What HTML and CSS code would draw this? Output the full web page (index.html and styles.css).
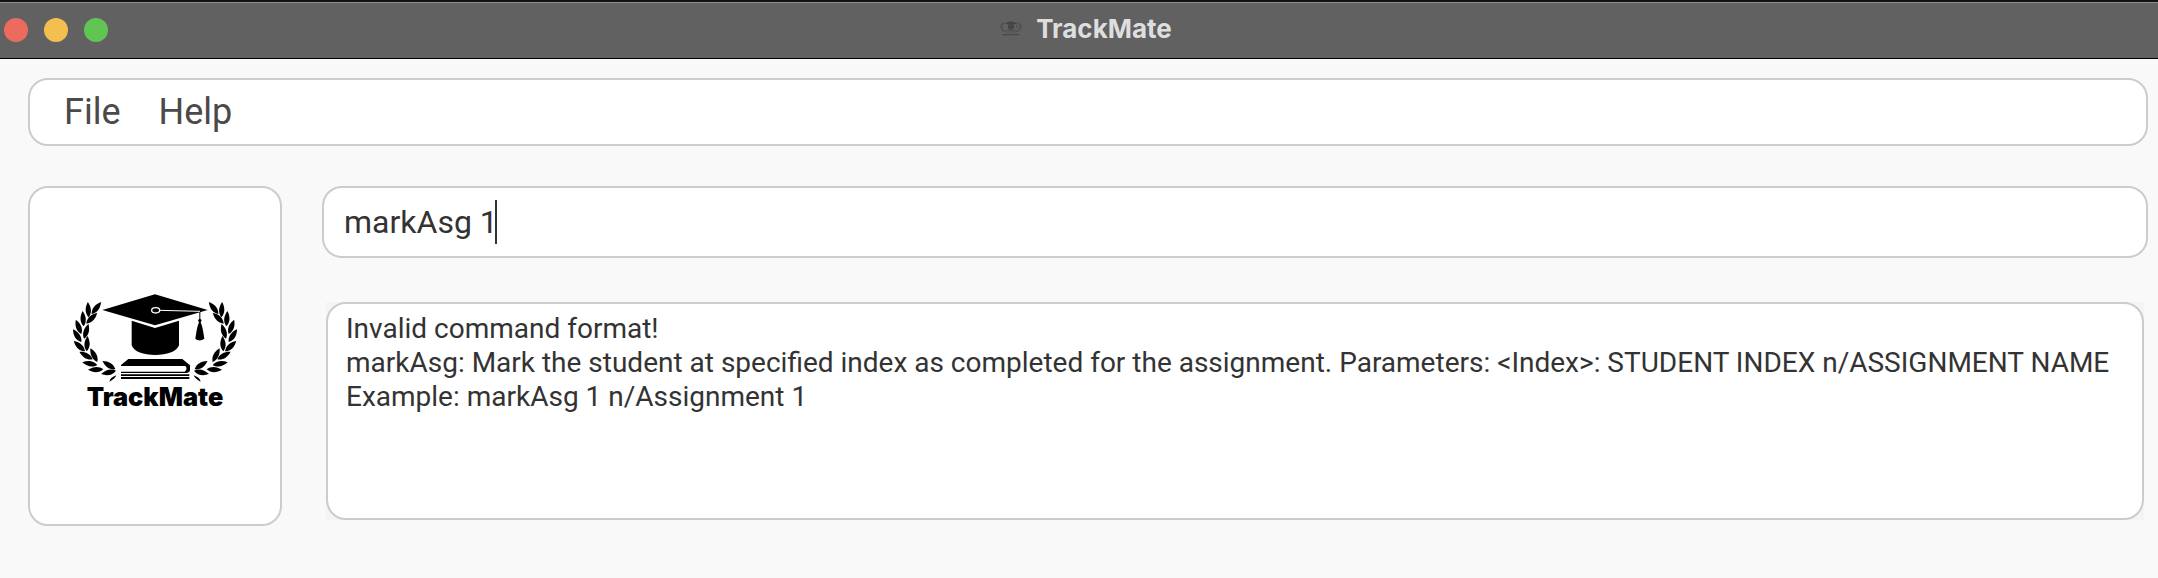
FILE: index.html
```html
<!DOCTYPE html>
<html lang="en">
<head>
<meta charset="utf-8">
<title>TrackMate</title>
<link rel="stylesheet" href="styles.css">
</head>
<body>
<header class="titlebar">
  <div class="window-controls">
    <button class="dot dot-close" type="button" aria-label="Close"></button>
    <button class="dot dot-minimize" type="button" aria-label="Minimize"></button>
    <button class="dot dot-zoom" type="button" aria-label="Zoom"></button>
  </div>
  <div class="window-title">
    <svg class="title-icon" viewBox="30 40 510 340" aria-hidden="true">
      <use href="#emblem"/>
      <path d="M90 350H480" stroke="#444" stroke-width="30" stroke-dasharray="36 8"/>
    </svg>
    <span>TrackMate</span>
  </div>
</header>
<main class="window-body">
  <nav class="panel menubar">
    <button class="menu-item" type="button">File</button>
    <button class="menu-item" type="button">Help</button>
  </nav>
  <div class="content">
    <aside class="panel brand">
      <svg class="brand-logo" viewBox="0 0 570 456" role="img" aria-label="TrackMate">
        <defs>
          <path id="leaf" d="M0 0C-11 -13 -10 -30 0 -46C10 -30 11 -13 0 0Z"/>
          <g id="branch">
            <use href="#leaf" transform="translate(95 102) rotate(38)"/>
            <use href="#leaf" transform="translate(86 112) rotate(-3)"/>
            <use href="#leaf" transform="translate(79 131) rotate(45)"/>
            <use href="#leaf" transform="translate(71 139) rotate(-4)"/>
            <use href="#leaf" transform="translate(64 162) rotate(-21)"/>
            <use href="#leaf" transform="translate(72 176) rotate(17)"/>
            <use href="#leaf" transform="translate(64 186) rotate(-33)"/>
            <use href="#leaf" transform="translate(80 214) rotate(3)"/>
            <use href="#leaf" transform="translate(75 214) rotate(-47)"/>
            <use href="#leaf" transform="translate(112 246) rotate(-27)"/>
            <use href="#leaf" transform="translate(98 238) rotate(-60)"/>
            <use href="#leaf" transform="translate(112 255) rotate(-80)"/>
            <use href="#leaf" transform="translate(166 268) rotate(-57)"/>
            <use href="#leaf" transform="translate(130 268) rotate(-92)"/>
            <use href="#leaf" transform="translate(168 272) rotate(-103)"/>
            <path d="M148 305Q151 292 169 286Q164 298 148 305Z"/>
          </g>
          <g id="emblem">
            <use href="#branch"/>
            <use href="#branch" transform="translate(570 0) scale(-1 1)"/>
            <path d="M127 90L285 43L443 90L285 136Z"/>
            <path d="M215 122L285 144L357 122V196C350 216 320 225 286 225C250 225 222 216 215 196Z"/>
            <path d="M418 94L421 94V116L425 121L422 127C428 140 430 158 433 176Q420 186 406 177C409 158 411 140 417 127L414 121L418 116Z"/>
            <path d="M205 237H367L390 256V270Q390 278 378 279H183V275H374Q384 266 376 258H183V255Z"/>
            <path d="M183 283H388V288H183ZM183 291H388V297H183Z"/>
          </g>
        </defs>
        <use href="#emblem"/>
        <path d="M300 91L420 94" stroke="#fff" stroke-width="3"/>
        <ellipse cx="287" cy="91" rx="12" ry="8" fill="none" stroke="#fff" stroke-width="4"/>
        <text class="wordmark" x="285" y="377" text-anchor="middle">TrackMate</text>
      </svg>
    </aside>
    <section class="console">
      <div class="command">
        <input class="panel command-input" type="text" value="markAsg 1" aria-label="Command">
        <span class="caret" aria-hidden="true"></span>
      </div>
      <div class="result">
        <textarea class="panel result-text" aria-label="Result" readonly>Invalid command format!
markAsg: Mark the student at specified index as completed for the assignment. Parameters: &lt;Index&gt;: STUDENT INDEX n/ASSIGNMENT NAME
Example: markAsg 1 n/Assignment 1</textarea>
      </div>
    </section>
  </div>
</main>
</body>
</html>
```
FILE: styles.css
```css
* { box-sizing: border-box; }
body {
  margin: 0;
  min-height: 100vh;
  background: #f9f9f9;
  color: #333;
  font-family: Roboto, "Liberation Sans", sans-serif;
}
.titlebar {
  display: grid;
  grid-template-columns: 1fr auto 1fr;
  align-items: center;
  height: 59px;
  padding: 0 4px;
  background: #616161;
  border-top: 2px solid #111;
  border-bottom: 1px solid #000;
  box-shadow: inset 0 1px #8c9086;
}
.window-controls { display: flex; gap: 16px; }
.dot { width: 24px; height: 24px; padding: 0; border: 0; border-radius: 50%; }
.dot-close { background: #ed6a5e; }
.dot-minimize { background: #f5bf4f; }
.dot-zoom { background: #61c554; }
.window-title { display: flex; align-items: center; gap: 14px; padding: 0 0 3px 14px; color: #dedede; font-family: Inter, sans-serif; font-size: 26px; font-weight: 700; }
.title-icon { width: 22px; height: 15px; fill: #444; }
.window-body { padding: 19px 10px 40px 28px; }
.panel { background: #fff; border: 2px solid #ccc; border-radius: 20px; }
.menubar { display: flex; align-items: center; gap: 38px; height: 68px; padding: 0 34px; }
.menu-item { padding: 0; border: 0; background: none; color: #4a4a4a; font: inherit; font-size: 36px; }
.content { display: flex; gap: 40px; margin-top: 40px; }
.brand { display: flex; flex: none; align-items: center; justify-content: center; width: 254px; height: 340px; }
.brand-logo { width: 190px; height: 152px; }
.wordmark { font-family: Inter, sans-serif; font-size: 76px; font-weight: 900; }
.console { display: flex; flex: 1; flex-direction: column; gap: 44px; min-width: 0; }
.command { position: relative; }
.command-input { display: block; width: 100%; height: 72px; padding: 0 20px; color: inherit; font: inherit; font-size: 32px; outline: 0; }
.caret { position: absolute; top: 14px; left: 173px; width: 2px; height: 44px; background: #333; }
.result { margin: 0 4px; background: #f4f4f4; }
.result-text { display: block; width: 100%; height: 218px; padding: 8px 18px; color: inherit; font: inherit; font-size: 28px; line-height: 34px; resize: none; outline: 0; overflow: hidden; }
```
